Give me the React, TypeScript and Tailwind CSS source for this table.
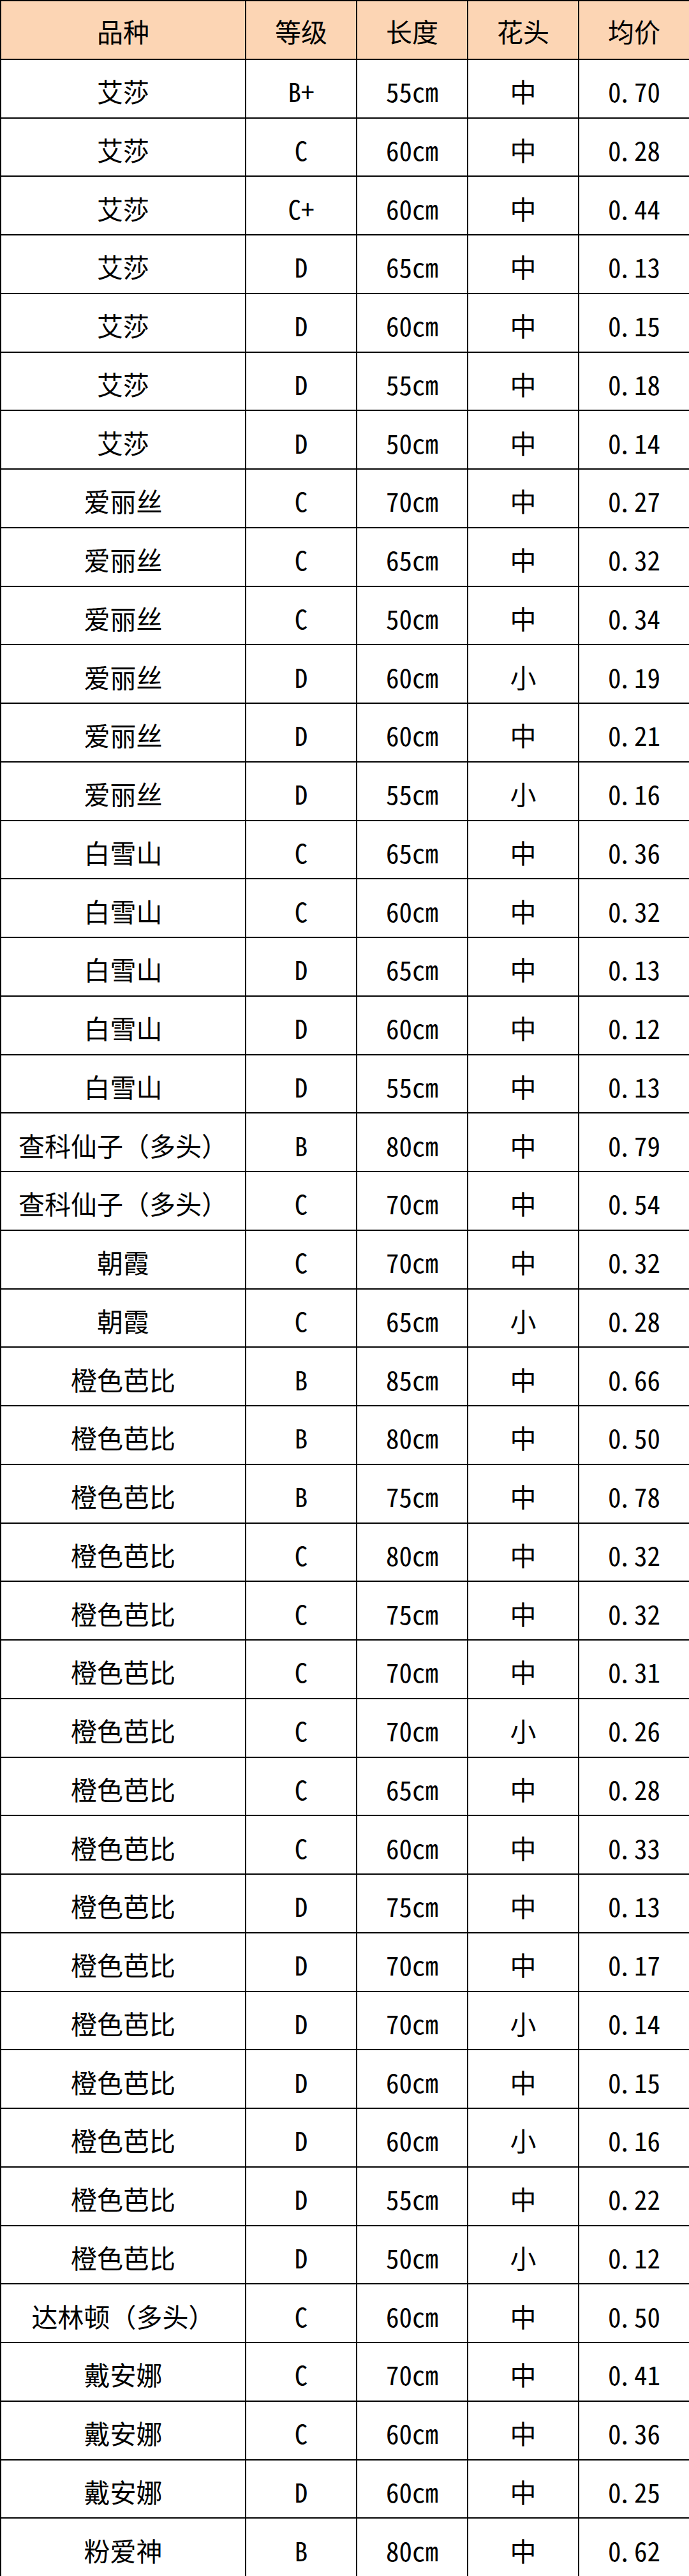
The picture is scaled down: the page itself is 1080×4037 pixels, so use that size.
type Row = [string, string, string, string, string];

// 品种 / 等级 / 长度 / 花头 / 均价
const rows: Row[] = [
  ['艾莎', 'B+', '55cm', '中', '0.70'],
  ['艾莎', 'C', '60cm', '中', '0.28'],
  ['艾莎', 'C+', '60cm', '中', '0.44'],
  ['艾莎', 'D', '65cm', '中', '0.13'],
  ['艾莎', 'D', '60cm', '中', '0.15'],
  ['艾莎', 'D', '55cm', '中', '0.18'],
  ['艾莎', 'D', '50cm', '中', '0.14'],
  ['爱丽丝', 'C', '70cm', '中', '0.27'],
  ['爱丽丝', 'C', '65cm', '中', '0.32'],
  ['爱丽丝', 'C', '50cm', '中', '0.34'],
  ['爱丽丝', 'D', '60cm', '小', '0.19'],
  ['爱丽丝', 'D', '60cm', '中', '0.21'],
  ['爱丽丝', 'D', '55cm', '小', '0.16'],
  ['白雪山', 'C', '65cm', '中', '0.36'],
  ['白雪山', 'C', '60cm', '中', '0.32'],
  ['白雪山', 'D', '65cm', '中', '0.13'],
  ['白雪山', 'D', '60cm', '中', '0.12'],
  ['白雪山', 'D', '55cm', '中', '0.13'],
  ['查科仙子（多头）', 'B', '80cm', '中', '0.79'],
  ['查科仙子（多头）', 'C', '70cm', '中', '0.54'],
  ['朝霞', 'C', '70cm', '中', '0.32'],
  ['朝霞', 'C', '65cm', '小', '0.28'],
  ['橙色芭比', 'B', '85cm', '中', '0.66'],
  ['橙色芭比', 'B', '80cm', '中', '0.50'],
  ['橙色芭比', 'B', '75cm', '中', '0.78'],
  ['橙色芭比', 'C', '80cm', '中', '0.32'],
  ['橙色芭比', 'C', '75cm', '中', '0.32'],
  ['橙色芭比', 'C', '70cm', '中', '0.31'],
  ['橙色芭比', 'C', '70cm', '小', '0.26'],
  ['橙色芭比', 'C', '65cm', '中', '0.28'],
  ['橙色芭比', 'C', '60cm', '中', '0.33'],
  ['橙色芭比', 'D', '75cm', '中', '0.13'],
  ['橙色芭比', 'D', '70cm', '中', '0.17'],
  ['橙色芭比', 'D', '70cm', '小', '0.14'],
  ['橙色芭比', 'D', '60cm', '中', '0.15'],
  ['橙色芭比', 'D', '60cm', '小', '0.16'],
  ['橙色芭比', 'D', '55cm', '中', '0.22'],
  ['橙色芭比', 'D', '50cm', '小', '0.12'],
  ['达林顿（多头）', 'C', '60cm', '中', '0.50'],
  ['戴安娜', 'C', '70cm', '中', '0.41'],
  ['戴安娜', 'C', '60cm', '中', '0.36'],
  ['戴安娜', 'D', '60cm', '中', '0.25'],
  ['粉爱神', 'B', '80cm', '中', '0.62'],
];

const headers = ['品种', '等级', '长度', '花头', '均价'];

// 黑体처럼 소수점이 반각 한 칸(왼쪽 붙음)을 차지하게
function Price({ value }: { value: string }) {
  const [a, b] = value.split('.');
  return (
    <>
      {a}
      <span className="inline-block w-[0.5em] text-left [font-feature-settings:normal]">.</span>
      {b}
    </>
  );
}

export default function App() {
  return (
    <div className="w-[1080px] bg-white">
      <table className="w-[1080px] table-fixed border-collapse border-2 border-black text-center text-[41px] leading-none text-black font-['Noto_Sans_CJK_SC','Noto_Sans_CJK_JP',sans-serif]">
        <colgroup>
          <col className="w-[384px]" />
          <col className="w-[174px]" />
          <col className="w-[174px]" />
          <col className="w-[174px]" />
          <col className="w-[174px]" />
        </colgroup>
        <thead>
          <tr className="h-[91.75px] bg-[#fcd5b4]">
            {headers.map((h) => (
              <th key={h} className="border-2 border-black pt-1 font-normal">
                {h}
              </th>
            ))}
          </tr>
        </thead>
        <tbody>
          {rows.map((r, i) => (
            <tr key={i} className="h-[91.75px]">
              <td className="border-2 border-black pt-2 whitespace-nowrap">{r[0]}</td>
              <td className="border-2 border-black pt-2 whitespace-nowrap [font-feature-settings:'hwid']">{r[1]}</td>
              <td className="border-2 border-black pt-2 whitespace-nowrap [font-feature-settings:'hwid']">{r[2]}</td>
              <td className="border-2 border-black pt-2 whitespace-nowrap">{r[3]}</td>
              <td className="border-2 border-black pt-2 whitespace-nowrap [font-feature-settings:'hwid']">
                <Price value={r[4]} />
              </td>
            </tr>
          ))}
        </tbody>
      </table>
    </div>
  );
}
